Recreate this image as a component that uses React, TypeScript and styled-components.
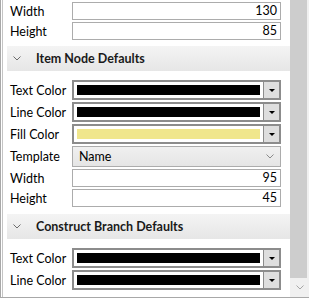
import styled, { createGlobalStyle } from 'styled-components';

// property grid, scrolled to the bottom

const GlobalStyle = createGlobalStyle`
  html, body {
    margin: 0;
    padding: 0;
    background: #ffffff;
    overflow: hidden;
  }
  body {
    font-family: Lato, 'Noto Sans', sans-serif;
    font-size: 12.5px;
    color: #000000;
  }
`;

type Field =
  | { kind: 'number'; label: string; value: string }
  | { kind: 'color'; label: string; color: string }
  | { kind: 'select'; label: string; value: string };

const topFields: Field[] = [
  { kind: 'number', label: 'Width', value: '130' },
  { kind: 'number', label: 'Height', value: '85' },
];

const sections: { title: string; fields: Field[] }[] = [
  {
    title: 'Item Node Defaults',
    fields: [
      { kind: 'color', label: 'Text Color', color: '#000000' },
      { kind: 'color', label: 'Line Color', color: '#000000' },
      { kind: 'color', label: 'Fill Color', color: '#f0e68c' },
      { kind: 'select', label: 'Template', value: 'Name' },
      { kind: 'number', label: 'Width', value: '95' },
      { kind: 'number', label: 'Height', value: '45' },
    ],
  },
  {
    title: 'Construct Branch Defaults',
    fields: [
      { kind: 'color', label: 'Text Color', color: '#000000' },
      { kind: 'color', label: 'Line Color', color: '#000000' },
    ],
  },
];

const Chevron = ({ color }: { color: string }) => (
  <svg width="8" height="5" viewBox="0 0 8 5">
    <path d="M0.5 0.5 L4 4 L7.5 0.5" fill="none" stroke={color} strokeWidth="1" />
  </svg>
);

const Control = ({ field }: { field: Field }) => {
  if (field.kind === 'number') return <NumberBox>{field.value}</NumberBox>;
  if (field.kind === 'select')
    return (
      <SelectBox>
        <span>{field.value}</span>
        <Chevron color="#8a8a8a" />
      </SelectBox>
    );
  return (
    <ColorBox>
      <Swatch $color={field.color} />
      <DropBtn>
        <Arrow />
      </DropBtn>
    </ColorBox>
  );
};

const Rows = ({ fields }: { fields: Field[] }) => (
  <RowList>
    {fields.map((f, i) => (
      <Row key={i} $kind={f.kind}>
        <Label>{f.label}</Label>
        <Control field={f} />
      </Row>
    ))}
  </RowList>
);

const App = () => {
  return (
    <Frame>
      <GlobalStyle />
      <Panel>
        <Rows fields={topFields} />
        {sections.map((s) => (
          <Section key={s.title}>
            <Header>
              <HeaderIcon>
                <Chevron color="#6d6d6d" />
              </HeaderIcon>
              {s.title}
            </Header>
            <Rows fields={s.fields} />
          </Section>
        ))}
      </Panel>
      <ScrollBar>
        <Thumb />
        <DownArrow>
          <Chevron color="#a6a6a6" />
        </DownArrow>
      </ScrollBar>
    </Frame>
  );
};

const Frame = styled.div`
  width: 309px;
  height: 298px;
  box-sizing: border-box;
  display: flex;
  border-left: 1px solid #a8a8a8;
  border-bottom: 1px solid #a8a8a8;
  overflow: hidden;
`;
const Panel = styled.div`
  flex: 1;
  margin-left: 1px;
  border-left: 1px solid #c4c4c4;
  padding: 1px 0 0 4px;
  overflow: hidden;
`;
const Section = styled.div`
  margin-top: 5px;
  & + & {
    margin-top: 6px;
  }
`;
const Header = styled.div`
  height: 25px;
  display: flex;
  align-items: center;
  background: linear-gradient(#f4f4f4, #e6e6e6);
  font-weight: 700;
  color: #1a1a1a;
  margin-bottom: 8px;
`;
const HeaderIcon = styled.span`
  display: flex;
  width: 29px;
  padding-left: 6px;
  box-sizing: border-box;
`;
const RowList = styled.div`
  display: flex;
  flex-direction: column;
`;
const Row = styled.div<{ $kind: Field['kind'] }>`
  display: grid;
  grid-template-columns: 62px 1fr;
  align-items: center;
  padding: 0 9px 0 3px;
  height: ${(p) => (p.$kind === 'color' ? 22 : p.$kind === 'select' ? 23 : 20)}px;
`;
const Label = styled.div`
  white-space: nowrap;
`;
const NumberBox = styled.div`
  height: 18px;
  box-sizing: border-box;
  border: 1px solid #acacac;
  text-align: right;
  padding-right: 3px;
  line-height: 16px;
`;
const SelectBox = styled.div`
  height: 21px;
  box-sizing: border-box;
  border: 1px solid #acacac;
  background: linear-gradient(#f0f0f0, #e5e5e5);
  display: flex;
  align-items: center;
  justify-content: space-between;
  padding: 0 6px 0 6px;
`;
const ColorBox = styled.div`
  height: 20px;
  box-sizing: border-box;
  border: 2px solid #8c8c8c;
  display: flex;
  align-items: center;
  background: #ffffff;
`;
const Swatch = styled.div<{ $color: string }>`
  flex: 1;
  height: 10px;
  margin: 0 3px 0 3px;
  background: ${(p) => p.$color};
`;
const DropBtn = styled.div`
  width: 15px;
  align-self: stretch;
  border-left: 1px solid #8c8c8c;
  background: #dedede;
  display: flex;
  align-items: center;
  justify-content: center;
`;
const Arrow = styled.div`
  width: 0;
  height: 0;
  border-left: 3px solid transparent;
  border-right: 3px solid transparent;
  border-top: 3px solid #000000;
`;
const ScrollBar = styled.div`
  width: 19px;
  display: flex;
  flex-direction: column;
  background: #f0f0f0;
`;
const Thumb = styled.div`
  flex: 1;
  width: 17px;
  background: #cdcdcd;
`;
const DownArrow = styled.div`
  height: 19px;
  display: flex;
  align-items: center;
  justify-content: center;
`;

export default App;
